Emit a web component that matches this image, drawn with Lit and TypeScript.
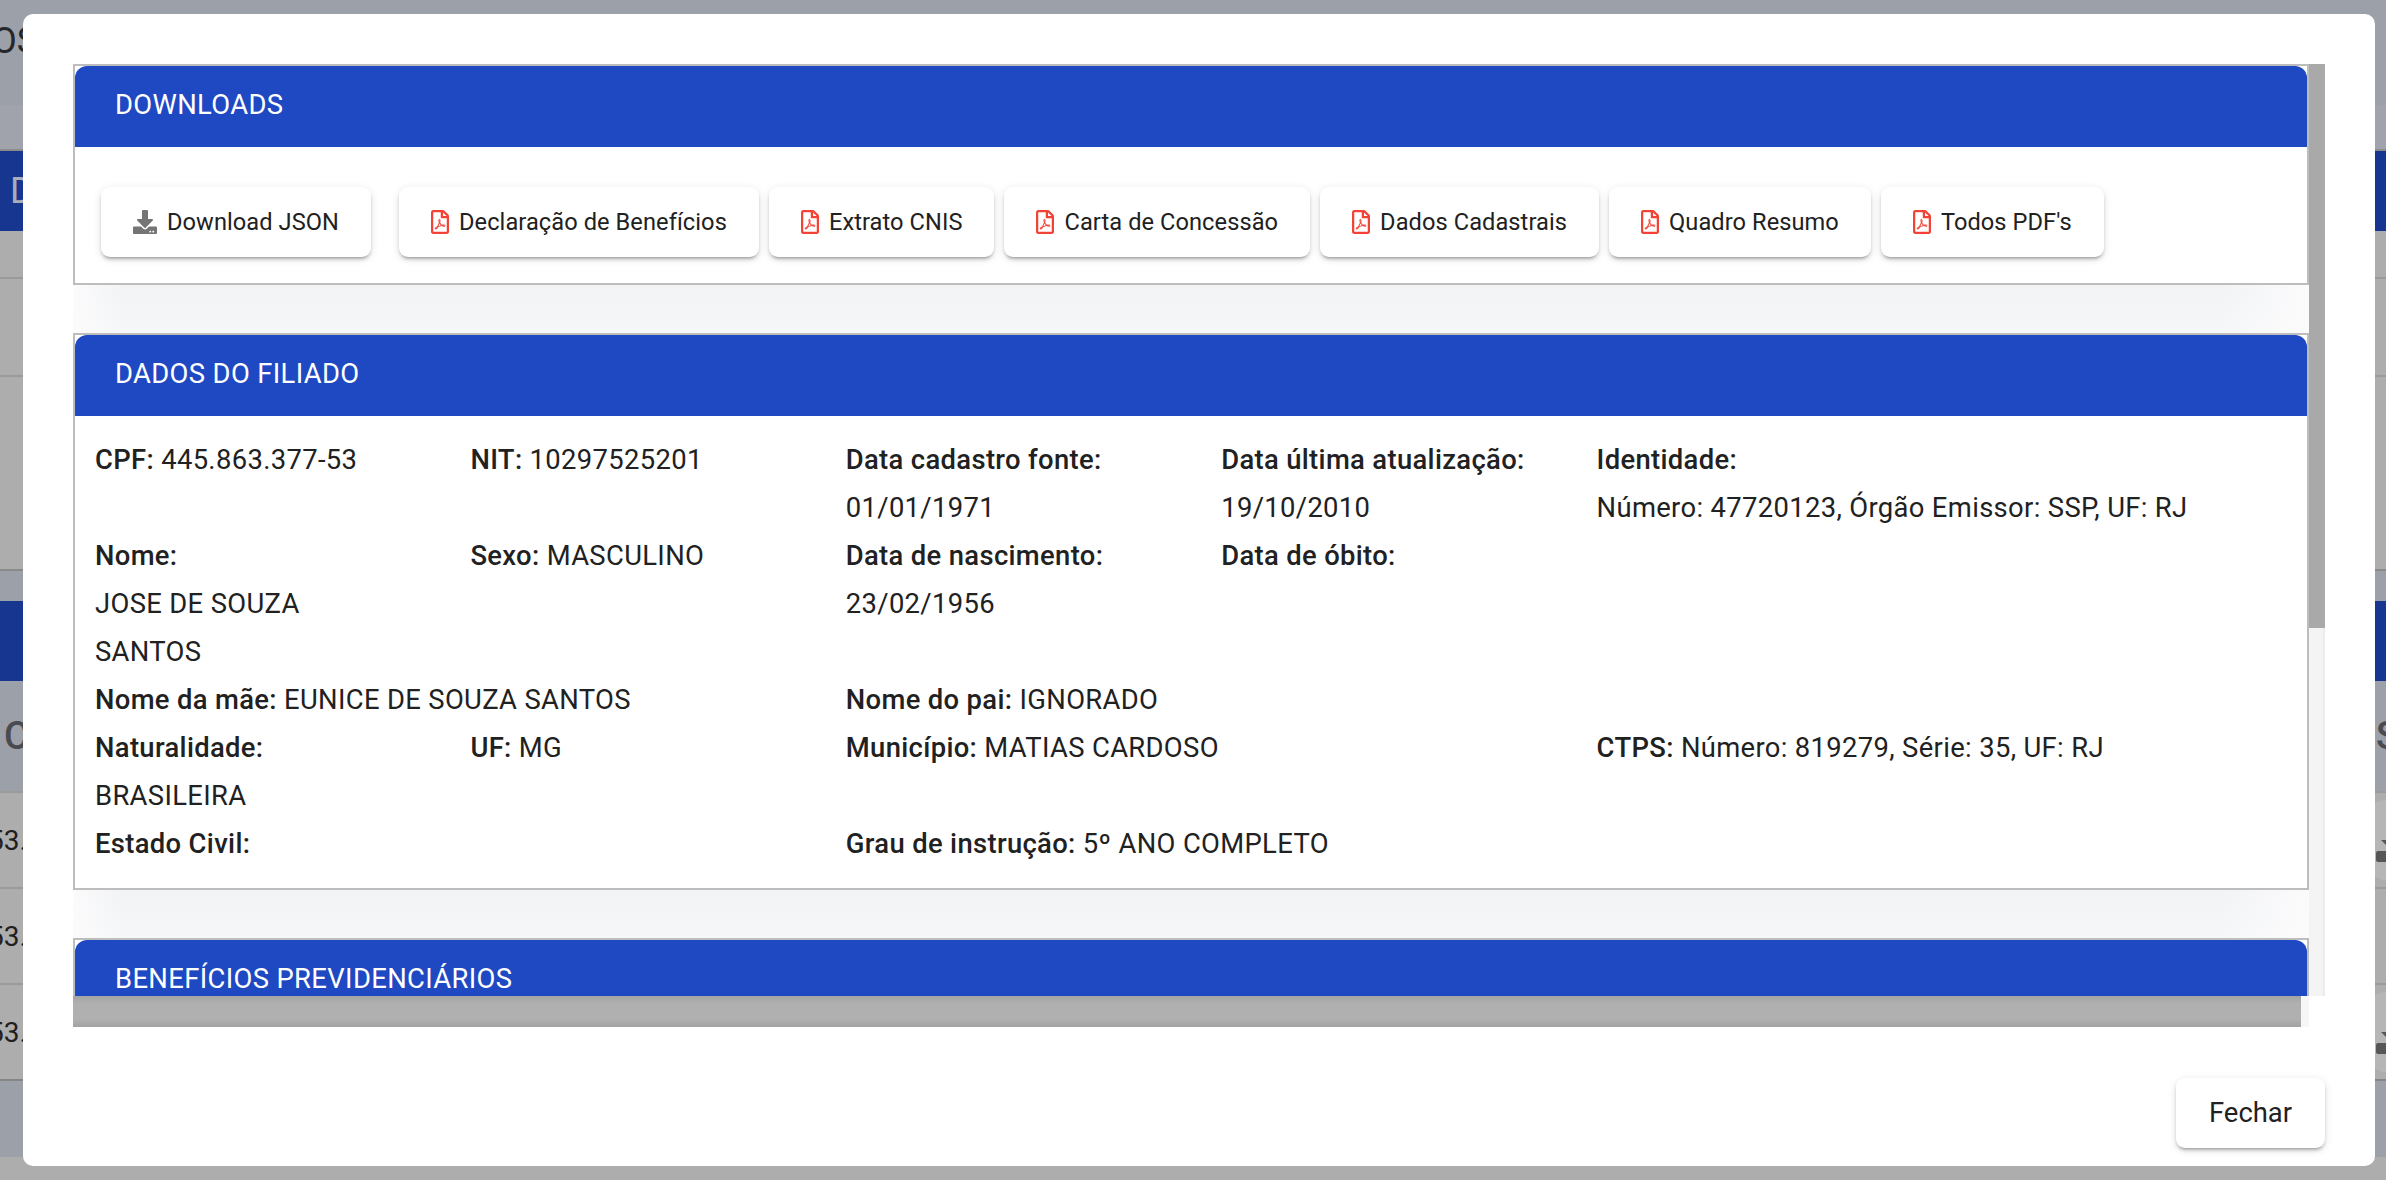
import { LitElement, html, css, svg } from 'lit';
import { customElement } from 'lit/decorators.js';

const downloadIcon = svg`<path d="M216 0h80c13.3 0 24 10.7 24 24v168h87.7c17.8 0 26.7 21.5 14.1 34.1L269.7 378.3c-7.5 7.5-19.8 7.5-27.3 0L90.1 226.1c-12.6-12.6-3.7-34.1 14.1-34.1H192V24c0-13.3 10.7-24 24-24zm296 376v112c0 13.3-10.7 24-24 24H24c-13.3 0-24-10.7-24-24V376c0-13.3 10.7-24 24-24h146.7l49 49c20.1 20.1 52.5 20.1 72.6 0l49-49H488c13.3 0 24 10.7 24 24zm-124 88c0-11-9-20-20-20s-20 9-20 20 9 20 20 20 20-9 20-20zm64 0c0-11-9-20-20-20s-20 9-20 20 9 20 20 20 20-9 20-20z"/>`;
const pdfIcon = svg`<path d="M369.9 97.9L286 14C277 5 264.8-.1 252.1-.1H48C21.5 0 0 21.5 0 48v416c0 26.5 21.5 48 48 48h288c26.5 0 48-21.5 48-48V131.9c0-12.7-5.1-25-14.1-34zM332.1 128H256V51.9l76.1 76.1zM48 464V48h160v104c0 13.3 10.7 24 24 24h104v288H48zm250.2-143.7c-12.2-12-47-8.7-64.4-6.5-17.2-10.5-28.7-25-36.8-46.3 3.9-16.1 10.1-40.6 5.4-56-4.2-26.2-37.8-23.6-42.6-5.9-4.4 16.1-.4 38.5 7 67.1-10 23.9-24.9 56-35.4 74.4-20 10.3-47 26.2-51 46.2-3.3 15.8 26 55.2 76.1-31.2 22.4-7.4 46.8-16.5 68.4-20.1 18.9 10.2 41 17 55.8 17 25.5 0 28-28.2 17.5-38.7zm-198.1 77.8c5.1-13.7 24.5-29.5 30.4-35-19 30.3-30.4 35.7-30.4 35zm81.6-190.6c7.4 0 6.7 32.1 1.8 40.8-4.4-13.9-4.3-40.8-1.8-40.8zm-24.4 136.6c9.7-16.9 18-37 24.7-54.7 8.3 15.1 18.9 27.2 30.1 35.5-20.8 4.3-38.9 13.1-54.8 19.2zm131.6-5s-5 6-37.3-7.8c35.1-2.6 40.9 5.4 37.3 7.8z"/>`;

const pdfButtons = ['Declaração de Benefícios', 'Extrato CNIS', 'Carta de Concessão', 'Dados Cadastrais', 'Quadro Resumo', "Todos PDF's"];

// label, value, extra class
const fields: [string, string, string][] = [
  ['CPF:', '445.863.377-53', ''],
  ['NIT:', '10297525201', ''],
  ['Data cadastro fonte:', '01/01/1971', ''],
  ['Data última atualização:', '19/10/2010', ''],
  ['Identidade:', 'Número: 47720123, Órgão Emissor: SSP, UF: RJ', 'span2'],
  ['Nome:', 'JOSE DE SOUZA SANTOS', 'first'],
  ['Sexo:', 'MASCULINO', ''],
  ['Data de nascimento:', '23/02/1956', ''],
  ['Data de óbito:', '', ''],
  ['Nome da mãe:', 'EUNICE DE SOUZA SANTOS', 'first span2'],
  ['Nome do pai:', 'IGNORADO', 'span2'],
  ['Naturalidade:', 'BRASILEIRA', 'first'],
  ['UF:', 'MG', ''],
  ['Município:', 'MATIAS CARDOSO', 'span2'],
  ['CTPS:', 'Número: 819279, Série: 35, UF: RJ', 'span2'],
  ['Estado Civil:', '', 'first span2'],
  ['Grau de instrução:', '5º ANO COMPLETO', 'span2'],
];

@customElement('app-root')
export class AppRoot extends LitElement {
  static styles = css`
    :host {
      display: block;
      position: relative;
      width: 2386px;
      height: 1180px;
      overflow: hidden;
      background: #adadad;
      font-family: Roboto, "Liberation Sans", sans-serif;
      color: #212121;
    }

    /* the dimmed page behind the dialog */
    .bg { display: flex; flex-direction: column; height: 1157px; background: #9ca0a9; }
    .bar-top { height: 105px; display: flex; align-items: center; overflow: hidden; }
    .bar-top span { font-size: 36px; margin-left: -8px; margin-top: -24px; color: #26272a; }
    .bar-sub { height: 44px; background: #a0a3ab; }
    .bar-blue {
      height: 80px;
      flex: none;
      border-top: 2px solid #8b8b8b;
      background: #16368f;
      display: flex;
      align-items: center;
      box-sizing: content-box;
    }
    .bar-blue span { font-size: 36px; color: #a9aeb9; margin-left: 10px; }
    .bar-blue.plain { border-top: 0; }
    .grey { background: #adadad; border-bottom: 2px solid #9a9a9a; flex: none; }
    .grey.g1 { height: 46px; }
    .grey.g2 { height: 96px; }
    .grey.g3 { height: 192px; border-bottom-color: #8a8a8a; }
    .gap { height: 30px; flex: none; }
    .bar-head {
      height: 110px;
      flex: none;
      display: flex;
      justify-content: space-between;
      align-items: center;
      font-size: 38px;
      font-weight: 500;
      color: #4a4b50;
      overflow: hidden;
      padding: 0;
    }
    .bar-head b { font-weight: 500; margin-left: 4px; }
    .bar-head i { font-style: normal; margin-right: -13px; }
    .row {
      position: relative;
      flex: none;
      height: 94px;
      background: #adadad;
      border-top: 2px solid #9a9a9a;
      display: flex;
      align-items: center;
      overflow: hidden;
      font-size: 28px;
      color: #1f1f1f;
    }
    .row.last { border-bottom: 2px solid #858585; }
    .row span { margin-left: -12px; }
    .circle {
      position: absolute;
      left: 2352px;
      top: 6px;
      width: 82px;
      height: 82px;
      border-radius: 50%;
      background: #b6b6b6;
    }
    .knob {
      position: absolute;
      left: 2376px;
      top: 58px;
      width: 14px;
      height: 11px;
      border-radius: 2px;
      background: #565656;
    }
    .caret {
      position: absolute;
      left: 2381px;
      top: 47px;
      width: 0;
      height: 0;
      border-left: 6px solid transparent;
      border-right: 6px solid transparent;
      border-top: 6px solid #565656;
    }

    /* dialog */
    .modal {
      position: absolute;
      left: 23px;
      top: 14px;
      width: 2352px;
      height: 1152px;
      box-sizing: border-box;
      padding: 50px 50px 18px;
      background: #fff;
      border-radius: 10px;
      display: flex;
      flex-direction: column;
    }
    .scroller { height: 963px; flex: none; display: flex; flex-direction: column; }
    .view { height: 932px; flex: none; display: flex; overflow: hidden; }
    .content { width: 2236px; flex: none; }
    .vbar { width: 16px; flex: none; background: #f4f4f4; box-shadow: inset -2px 0 2px rgba(0, 0, 0, 0.04); }
    .vthumb { height: 564px; background: #a9a9a9; }
    .hbar { width: 2236px; height: 31px; background: #f6f6f6; }
    .hthumb {
      width: 2228px;
      height: 31px;
      background: linear-gradient(#a4a4a4, #b0b0b0 25%, #b0b0b0 75%, #a2a2a2);
    }

    .card { border: 2px solid #bdbdbd; background: #fff; }
    .card-title {
      height: 81px;
      box-sizing: border-box;
      padding: 23px 40px 0;
      background: #1f49c3;
      border-radius: 12px 12px 0 0;
      color: #fff;
      font-size: 27.4px;
      letter-spacing: 0.36px;
      line-height: 32px;
    }
    .spacer {
      height: 48px;
      background:
        linear-gradient(90deg, #fbfbfc, rgba(251, 251, 252, 0) 50px, rgba(251, 251, 252, 0) calc(100% - 90px), #fbfbfc),
        linear-gradient(#f2f3f5, #f6f7f8);
    }

    .downloads { height: 136px; box-sizing: border-box; padding: 40px 0 0 26px; display: flex; }
    .btn {
      display: flex;
      align-items: center;
      gap: 10px;
      height: 70px;
      box-sizing: border-box;
      padding: 0 32px;
      margin-right: 10px;
      background: #fff;
      border: 0;
      border-radius: 9px;
      font-family: inherit;
      font-size: 23.6px;
      letter-spacing: 0.08px;
      color: #212121;
      white-space: nowrap;
      box-shadow: 0 4px 2px -3px rgba(0, 0, 0, 0.2), 0 3px 3px 0 rgba(0, 0, 0, 0.14), 0 2px 8px 0 rgba(0, 0, 0, 0.12);
    }
    .btn.json { margin-right: 28px; }
    .btn svg { height: 24px; flex: none; display: block; }
    .btn svg.dl { width: 24px; fill: #757575; }
    .btn svg.pdf { width: 18px; fill: #f44336; }

    .data {
      display: grid;
      grid-template-columns: repeat(6, 375.4px);
      padding: 20px 0 20px 20px;
      font-size: 27.4px;
      letter-spacing: 0.34px;
      line-height: 48px;
      height: 472px;
      box-sizing: border-box;
      align-content: start;
    }
    .cell { padding-right: 65px; min-width: 0; }
    .cell b { font-weight: 500; }
    .cell span { display: inline-block; }
    .first { grid-column-start: 1; }
    .span2 { grid-column-end: span 2; }

    .footer { flex: 1; display: flex; justify-content: flex-end; align-items: flex-end; }
    .close { font-size: 27.4px; letter-spacing: 0; width: 149px; justify-content: center; margin: 0; padding: 0; }
  `;

  renderField(f: [string, string, string]) {
    return html`<div class="cell ${f[2]}"><b>${f[0]}</b> ${f[1] ? html`<span>${f[1]}</span>` : ''}</div>`;
  }

  render() {
    return html`
      <div class="bg">
        <div class="bar-top"><span>OS</span></div>
        <div class="bar-sub"></div>
        <div class="bar-blue"><span>D</span></div>
        <div class="grey g1"></div>
        <div class="grey g2"></div>
        <div class="grey g3"></div>
        <div class="gap"></div>
        <div class="bar-blue plain"></div>
        <div class="bar-head"><b>C</b><i>S</i></div>
        <div class="row"><span>53.</span><div class="circle"></div><div class="caret"></div><div class="knob"></div></div>
        <div class="row"><span>53.</span></div>
        <div class="row last"><span>53.</span><div class="circle"></div><div class="caret"></div><div class="knob"></div></div>
      </div>

      <div class="modal">
        <div class="scroller">
          <div class="view">
            <div class="content">
              <section class="card">
                <div class="card-title">DOWNLOADS</div>
                <div class="downloads">
                  <button class="btn json">
                    <svg class="dl" viewBox="0 0 512 512">${downloadIcon}</svg>Download JSON
                  </button>
                  ${pdfButtons.map(
                    (b) => html`<button class="btn"><svg class="pdf" viewBox="0 0 384 512">${pdfIcon}</svg>${b}</button>`
                  )}
                </div>
              </section>
              <div class="spacer"></div>
              <section class="card">
                <div class="card-title">DADOS DO FILIADO</div>
                <div class="data">${fields.map((f) => this.renderField(f))}</div>
              </section>
              <div class="spacer"></div>
              <section class="card">
                <div class="card-title">BENEFÍCIOS PREVIDENCIÁRIOS</div>
              </section>
            </div>
            <div class="vbar"><div class="vthumb"></div></div>
          </div>
          <div class="hbar"><div class="hthumb"></div></div>
        </div>
        <div class="footer"><button class="btn close">Fechar</button></div>
      </div>
    `;
  }
}
